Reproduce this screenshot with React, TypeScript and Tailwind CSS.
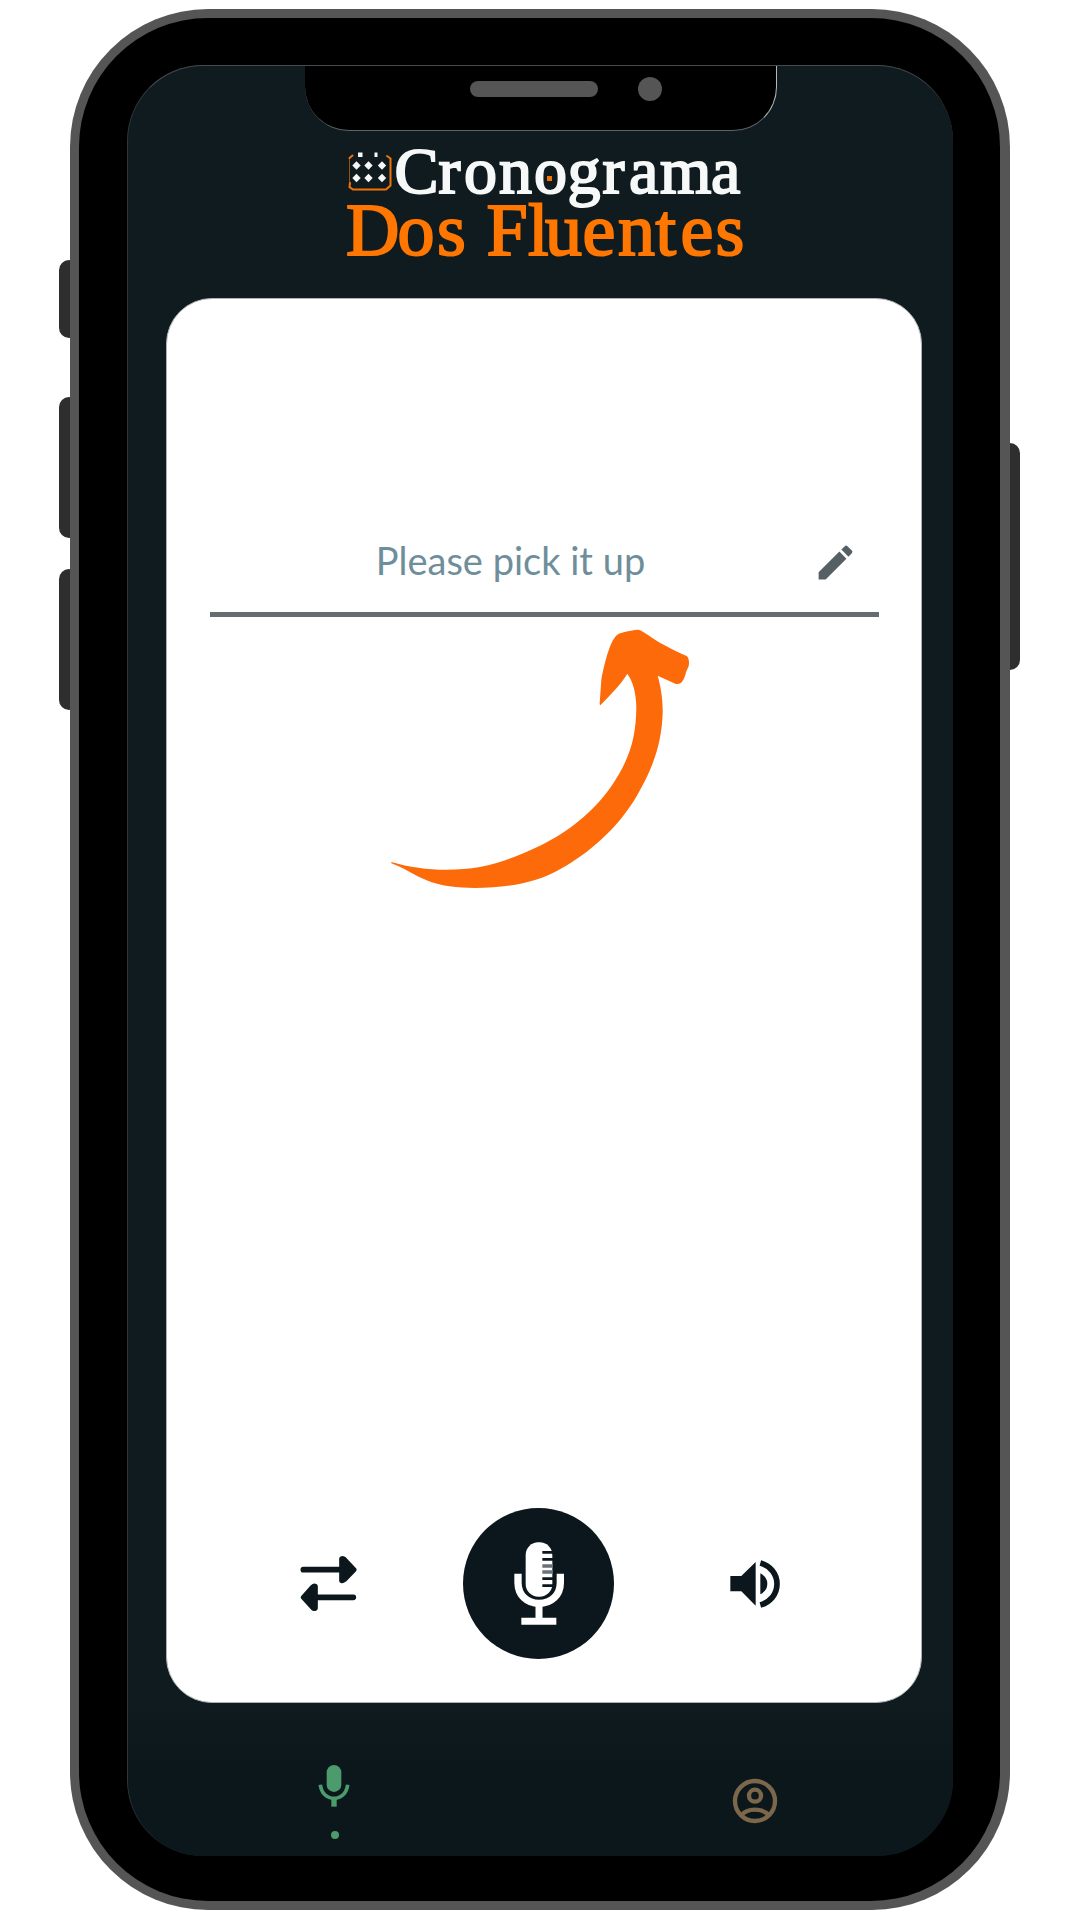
import React from "react";

function Logo() {
  return (
    <svg className="block h-[150px] w-[420px]" viewBox="336 127 420 150" style={{ fontFamily: '"Liberation Serif", serif' }}>
      <g fill="none" stroke="#f27405" strokeWidth="2" strokeLinecap="round">
        <path d="M352.5 155.5L349.5 158M350 183L349.500 187L353 189.500H386L390.500 185.500V158.500L387 156" />
        <path d="M349.500 159V183" strokeWidth="1" opacity=".6" />
      </g>
      <g fill="#f7f8f8">
        <rect x="358" y="152.500" width="4.500" height="4.500" />
        <rect x="374.500" y="152.500" width="3" height="4.500" />
        {[356.5, 368.5, 382].map((x) =>
          [165.5, 178].map((y) => (
            <path key={`${x}-${y}`} d={`M${x} ${y - 4.2}L${x + 4.2} ${y}L${x} ${y + 4.2}L${x - 4.2} ${y}Z`} />
          )),
        )}
      </g>
      <text x="394.500 438.500 464 499 534 567.500 602.500 629 660 711" y="192.500" fontSize="66" fill="#f7f8f8" stroke="#f7f8f8" strokeWidth="2">
        Cronograma
      </text>
      <rect x="547" y="176" width="5" height="5" fill="#f27405" />
      <text x="346 397.500 437 466 486.500 528 545 582.500 618 655.500 680.500 715.500" y="255" fontSize="74" fill="#ff7700" stroke="#ff7700" strokeWidth="2">
        Dos Fluentes
      </text>
    </svg>
  );
}

function CurvedArrow() {
  return (
    <svg className="block h-[300px] w-[340px]" viewBox="0 0 1020 900" fill="#fc6a0a">
      <path d="M64 756C150 782 245 785 330 771C400 758 450 734 510 707C590 670 670 606 722 532C776 452 798 390 799 292C798 248 789 215 772 191C752 224 725 250 691 286Q689 286 689 280L694 210C700 175 715 112 730 89Q739 71 756 68Q785 60 806 59C824 65 850 88 881 104C905 118 930 129 950 138Q957 143 957 160C957 174 948 182 947 192Q943 207 935 217Q928 225 916 221L863 197C873 230 879 275 878 310C875 410 842 485 802 555C745 655 655 730 575 775C505 818 410 834 315 834C265 834 208 828 170 811C132 796 105 775 64 760Z" />
    </svg>
  );
}

function SwapIcon() {
  return (
    <svg className="block h-[58px] w-[58px]" viewBox="62 194 174 174" fill="#0b171c" stroke="#0b171c" strokeLinejoin="round">
      <path d="M72 238H185M222 321H105" strokeWidth="17" strokeLinecap="round" />
      <path d="M187 205V271Q190 272 195 268L224 238L195 207Q191 203 187 205ZM108 288V354Q104 356 100 352L72 321L100 290Q104 286 108 288Z" strokeWidth="15" />
    </svg>
  );
}

function StudioMic() {
  return (
    <svg className="block h-[86px] w-[52px]" viewBox="698 153 156 258" fill="none">
      <rect x="736" y="157" width="80" height="163" rx="38" fill="white" />
      <path d="M713 251V278C713 315 740 340 776 340C813 340 840 315 840 278V251" stroke="white" strokeWidth="22" />
      <path d="M776 342V390M723 394H828" stroke="white" strokeWidth="21" />
      <path d="M786 187H818M786 208H818M786 266H818M786 287H818" stroke="#0b171c" strokeWidth="8" />
      <path d="M786 228H818M786 246H818" stroke="#68727a" strokeWidth="11" />
    </svg>
  );
}

function SpeakerIcon() {
  return (
    <svg className="block h-[50px] w-[52px]" viewBox="327 206 156 150" fill="#0b171c">
      <path d="M331 257H364L407 215V346L364 303H331ZM421 249Q442 260 442 280Q442 301 421 312Z" />
      <path d="M421 218C450 226 471 250 471 281C471 312 450 336 421 344" fill="none" stroke="#0b171c" strokeWidth="17" />
    </svg>
  );
}

function NavMic() {
  return (
    <svg className="block h-[44px] w-[34px]" viewBox="832 371 102 132" fill="#4c9b6d">
      <rect x="861" y="374" width="44" height="81" rx="22" />
      <path d="M842 433C845 459 862 474 883 474C904 474 921 459 924 433" fill="none" stroke="#4c9b6d" strokeWidth="11" />
      <rect x="875" y="472" width="16" height="27" />
    </svg>
  );
}

function ProfileIcon() {
  return (
    <svg className="block h-[46px] w-[46px]" viewBox="127 175 138 138" fill="none" stroke="#7c674b" strokeWidth="13">
      <circle cx="196" cy="244" r="60" />
      <circle cx="196" cy="228" r="18" />
      <path d="M155 287Q168 270 196 270Q224 270 237 287" />
    </svg>
  );
}

export default function App() {
  return (
    <main className="h-[1920px] w-[1080px] overflow-hidden bg-white pt-[9px] pl-[69.500px] font-['Lato',sans-serif]">
      <div className="relative h-[1901px] w-[940px]">
        <span className="absolute top-[251px] -left-[10.500px] h-[78px] w-5 rounded-[10px] bg-[#2e2e2e]" />
        <span className="absolute top-[388px] -left-[10.500px] h-[141px] w-5 rounded-[10px] bg-[#2e2e2e]" />
        <span className="absolute top-[560px] -left-[10.500px] h-[141px] w-5 rounded-[10px] bg-[#2e2e2e]" />
        <span className="absolute top-[434px] -right-[10px] h-[227px] w-5 rounded-[10px] bg-[#2e2e2e]" />

        <div className="relative h-full w-full rounded-[138px] bg-[#555555] p-[9.200px]">
          <div className="h-full w-full rounded-[129px] bg-black pt-[47.300px] pl-[48.800px]">
            <div className="relative flex h-[1790.500px] w-[825.500px] flex-col overflow-hidden rounded-[76px] border-t border-l border-t-[#454b4e] border-l-[#2d373b] bg-[#101b20]">
              <div className="absolute -top-px left-[176.500px] flex h-[65.500px] w-[472px] items-start rounded-b-[44px] border-r border-b border-r-[#b5b8b9] border-b-[#5b6366] bg-black pt-[11.500px] pl-[165.500px]">
                <span className="mt-1 h-4 w-32 rounded-full bg-[#555555]" />
                <span className="ml-10 size-6 rounded-full bg-[#555555]" />
              </div>

              <header className="h-[232px] shrink-0 pt-[60.500px] pl-[207.500px]">
                <Logo />
              </header>

              <section className="ml-[37.500px] h-[1404.500px] w-[756px] shrink-0 rounded-[46px] border border-[#aeb3b6] bg-white px-[43px] pt-[235px]">
                <div className="relative flex h-[83px] w-[669px] items-start border-b-[5px] border-[#646d72]">
                  <p className="w-[601px] pt-[4px] text-center text-[38px] leading-[44px] whitespace-nowrap text-[#6e8e9b]">
                    <span>Please pick it up</span>
                  </p>
                  <svg className="mt-[5.500px] ml-[2.500px] block size-[45px] shrink-0" viewBox="0 0 24 24" fill="#565f64">
                    <path d="M3 17.250V21h3.750L17.810 9.940l-3.750-3.750L3 17.250zM20.710 7.040a1 1 0 0 0 0-1.410l-2.340-2.340a1 1 0 0 0-1.410 0l-1.830 1.830 3.750 3.750 1.830-1.830z" />
                  </svg>
                </div>
                <div className="-mt-[7px] ml-[160px]">
                  <CurvedArrow />
                </div>
                <div className="mt-[597.500px] flex h-[152px] items-center pl-[90.400px]">
                  <SwapIcon />
                  <div className="ml-[105px] flex size-[151px] items-center justify-center rounded-full bg-[#0b171c]">
                    <StudioMic />
                  </div>
                  <div className="ml-[115px]">
                    <SpeakerIcon />
                  </div>
                </div>
              </section>

              <nav className="flex min-h-0 flex-1 items-start bg-linear-to-b from-[#101b20] via-[#0c171c] via-40% to-[#0c171c]">
                <div className="ml-[188px] flex w-9 flex-col items-center pt-[61.500px]">
                  <NavMic />
                  <span className="mt-[23px] ml-[2px] size-[8px] rounded-full bg-[#4c9b6d]" />
                </div>
                <div className="ml-[380px] pt-[75.500px]">
                  <ProfileIcon />
                </div>
              </nav>
            </div>
          </div>
        </div>
      </div>
    </main>
  );
}
